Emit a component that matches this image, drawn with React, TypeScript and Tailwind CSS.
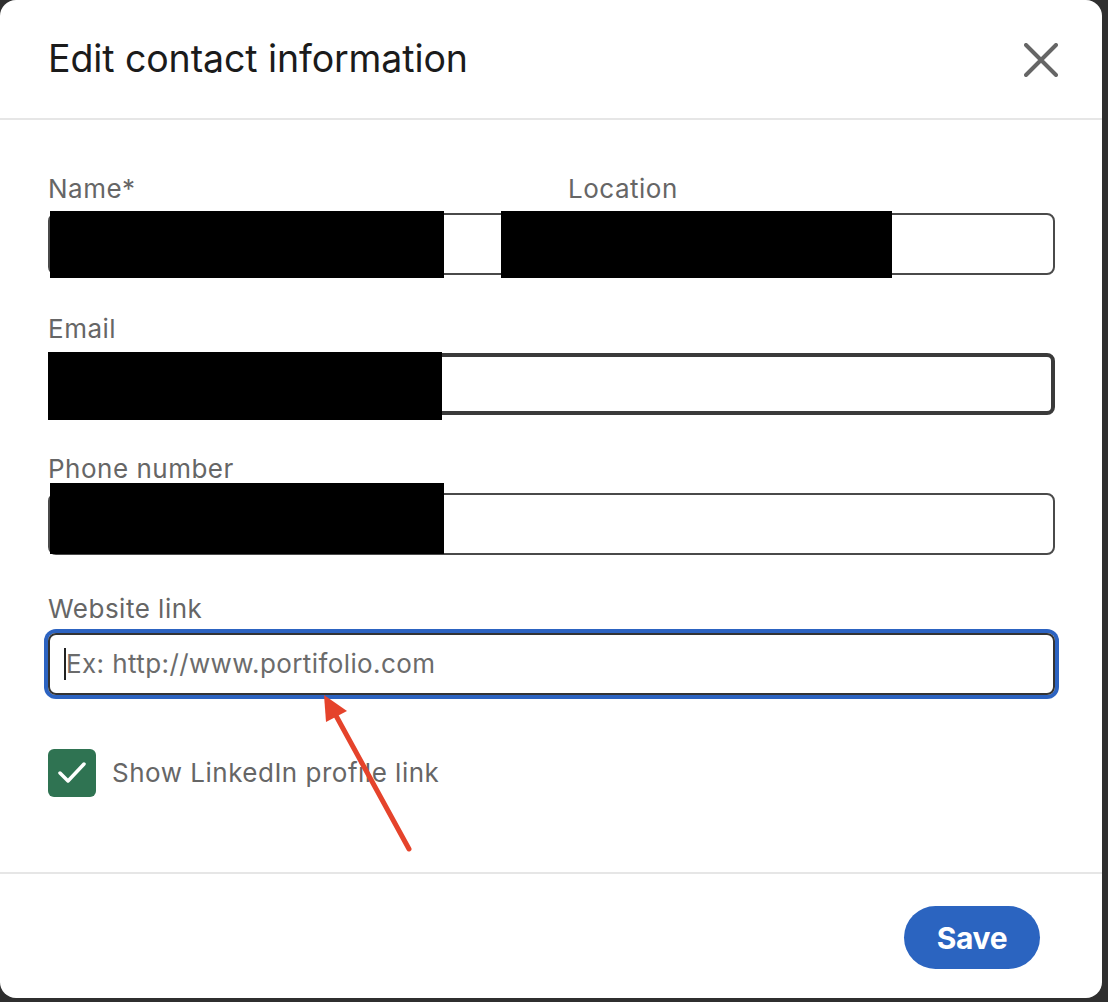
import React from "react";

const font = { fontFamily: "Inter, 'Noto Sans', 'Liberation Sans', sans-serif" };

function Redact({ className }: { className: string }) {
  return <div className={`absolute bg-black ${className}`} />;
}

export default function App() {
  return (
    <div className="relative w-[1108px] h-[1002px] bg-[#2f2f2f] overflow-hidden" style={font}>
      <div className="w-[1102px] h-[998px] bg-white rounded-[16px] flex flex-col">
        {/* Header */}
        <div className="h-[120px] shrink-0 flex items-center justify-between pl-[48px] pr-[44px] border-b-2 border-[#e6e6e6]">
          <h1 className="text-[37.5px] leading-[44px] text-[#1b1b1b] tracking-[-0.1px]">Edit contact information</h1>
          <svg width="34" height="34" viewBox="0 0 34 34" className="mt-[2px]">
            <path d="M2 2 L32 32 M32 2 L2 32" stroke="#666" strokeWidth="4" strokeLinecap="round" />
          </svg>
        </div>

        {/* Body */}
        <div className="flex-1 pl-[48px] pr-[47px] pt-[53px] flex flex-col">
          {/* Name / Location */}
          <div className="flex flex-col">
            <div className="flex h-[32px] text-[26px] leading-[32px] text-[#666] tracking-[0.5px]">
              <span className="w-[520px]">Name*</span>
              <span>Location</span>
            </div>
            <div className="relative mt-[8px] h-[62px] rounded-[8px] border-2 border-[#4a4a4a]">
              <Redact className="left-[0px] top-[-4px] w-[394px] h-[67px]" />
              <Redact className="left-[451px] top-[-4px] w-[391px] h-[67px]" />
            </div>
          </div>

          {/* Email */}
          <div className="flex flex-col mt-[38px]">
            <div className="h-[32px] text-[26px] leading-[32px] text-[#666] tracking-[0.5px]">Email</div>
            <div className="relative mt-[8px] h-[62px] rounded-[8px] border-[4px] border-[#3a3a3a]">
              <Redact className="left-[-4px] top-[-5px] w-[394px] h-[68px]" />
            </div>
          </div>

          {/* Phone */}
          <div className="flex flex-col mt-[38px]">
            <div className="h-[32px] text-[26px] leading-[32px] text-[#666] tracking-[0.5px]">Phone number</div>
            <div className="relative mt-[8px] h-[62px] rounded-[8px] border-2 border-[#4a4a4a]">
              <Redact className="left-[0px] top-[-12px] w-[394px] h-[71px]" />
            </div>
          </div>

          {/* Website */}
          <div className="flex flex-col mt-[38px]">
            <div className="h-[32px] text-[26px] leading-[32px] text-[#666] tracking-[0.5px]">Website link</div>
            <div className="mt-[8px] h-[62px] rounded-[8px] border-2 border-[#333] shadow-[0_0_0_4px_#2c63c1] flex items-center pl-[14px]">
              <span className="w-[2px] h-[32px] bg-[#222]" />
              <span className="text-[26px] leading-[32px] text-[#6b6b6b] tracking-[0.4px]">Ex: http://www.portifolio.com</span>
            </div>
          </div>

          {/* Checkbox */}
          <div className="flex items-center mt-[54px] gap-[16px]">
            <div className="w-[48px] h-[48px] rounded-[6px] bg-[#2f7352] flex items-center justify-center">
              <svg width="30" height="24" viewBox="0 0 30 24">
                <path d="M3 12 L11 20 L27 3" fill="none" stroke="#fff" strokeWidth="3.5" strokeLinecap="round" strokeLinejoin="round" />
              </svg>
            </div>
            <span className="text-[26px] leading-[32px] text-[#666] tracking-[0.5px]">Show LinkedIn profile link</span>
          </div>
        </div>

        {/* Footer */}
        <div className="h-[126px] shrink-0 border-t-2 border-[#e6e6e6] flex justify-end items-start pt-[32px] pr-[62px]">
          <button className="w-[136px] h-[63px] rounded-full bg-[#2b64c0] text-white text-[30px] font-bold leading-none tracking-[-0.3px]">
            Save
          </button>
        </div>
      </div>

      {/* Annotation arrow */}
      <svg className="absolute left-0 top-0 pointer-events-none" width="1108" height="1002">
        <line x1="409" y1="849" x2="334" y2="712" stroke="#e5432b" strokeWidth="5" strokeLinecap="round" />
        <polygon points="324,695 326,722 347,711" fill="#e5432b" />
      </svg>
    </div>
  );
}
